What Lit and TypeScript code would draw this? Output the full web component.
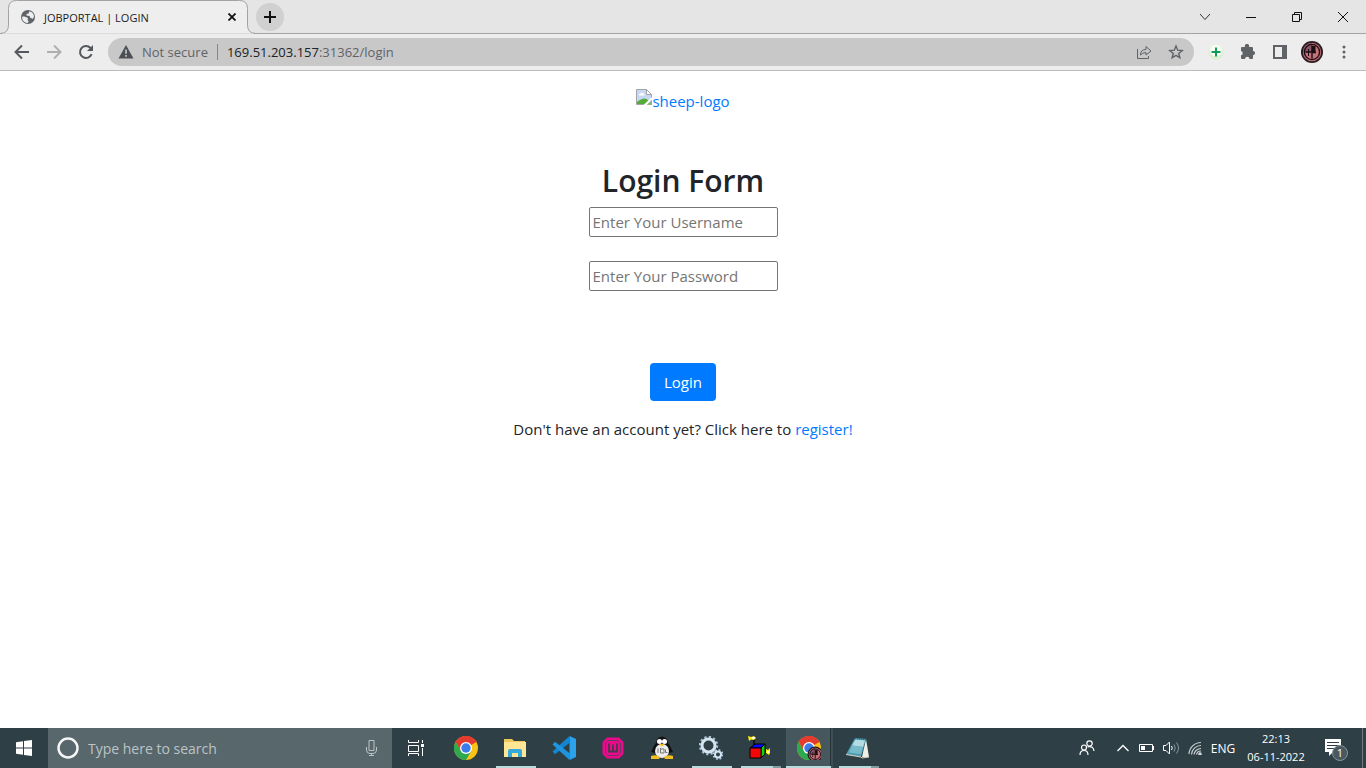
import { LitElement, html, css, svg } from "lit";
import { customElement } from "lit/decorators.js";
import { classMap } from "lit/directives/class-map.js";

const base = css`
  *,
  *::before,
  *::after {
    box-sizing: border-box;
  }
  button,
  input {
    margin: 0;
    padding: 0;
    border: 0;
    background: none;
    font: inherit;
    color: inherit;
  }
  svg {
    display: block;
    flex: none;
  }
`;

/* Shared Chrome logo, drawn in a 24-unit box. */
const chromeLogo = svg`
  <circle cx="12" cy="12" r="12" fill="#fbc116"/>
  <path d="M12 12 1.6 6A12 12 0 0 1 22.4 6Z" fill="#e33b2e"/>
  <path d="M12 6H22.4A12 12 0 0 0 1.6 6L6.8 15Z" fill="#e33b2e"/>
  <path d="M1.6 6A12 12 0 0 0 12 24L17.2 15 12 17.5 6.8 15Z" fill="#2da94f"/>
  <circle cx="12" cy="12" r="6" fill="#fff"/>
  <circle cx="12" cy="12" r="4.7" fill="#3a7de8"/>`;

/* Shared profile picture, drawn in a 22-unit box. */
const avatar = svg`
  <circle cx="11" cy="11" r="11" fill="#2a1a22"/>
  <circle cx="11" cy="11" r="9.2" fill="#c4727a"/>
  <path d="M11 2V11H2A9 9 0 0 1 11 2Z" fill="#8a5668"/>
  <circle cx="11" cy="11" r="7.6" fill="none" stroke="#1c0d12" stroke-width="1.4"/>
  <path d="M11 4.500V17.500M4.500 11H11M11 11.500H15" fill="none" stroke="#1c0d12" stroke-width="1.400"/>
  <path d="M11 5H14.500V11H11Z" fill="#1c0d12"/>
  <path d="M7.500 8V15" stroke="#1c0d12"/>`;

@customElement("browser-bar")
class BrowserBar extends LitElement {
  static styles = [
    base,
    css`
      :host {
        display: block;
        color: #5f6368;
      }
      .strip {
        display: flex;
        align-items: center;
        height: 34px;
        background: #e5e5e5;
        box-shadow: inset 0 -1px #a3a3a3;
      }
      .tab {
        position: relative;
        display: flex;
        align-items: center;
        gap: 8px;
        width: 256px;
        height: 34px;
        padding: 0 16px 0 20px;
        color: #1b1b1b;
        font-size: 11px;
      }
      .outline {
        position: absolute;
        inset: 0;
      }
      .tab > :not(.outline) {
        position: relative;
      }
      .title {
        flex: 1;
        white-space: nowrap;
      }
      button {
        display: grid;
        place-items: center;
      }
      .close {
        width: 16px;
        height: 16px;
      }
      .add {
        width: 28px;
        height: 28px;
        border-radius: 50%;
        background: #d0d0d0;
      }
      .controls {
        display: flex;
        margin-left: auto;
      }
      .controls button {
        width: 46px;
        height: 28px;
      }
      .toolbar {
        display: flex;
        align-items: center;
        height: 37px;
        padding: 0 6px;
        background: #ededed;
        border-bottom: 1px solid #bcbcbc;
      }
      .toolbar > button {
        width: 32px;
        height: 28px;
      }
      .address {
        display: flex;
        align-items: center;
        flex: 1;
        height: 28px;
        margin: 0 6px;
        padding: 0 2px 0 10px;
        border-radius: 14px;
        background: #c8c8c8;
        font-size: 13px;
      }
      .address button {
        width: 32px;
        height: 28px;
      }
      .address .secure {
        display: flex;
        align-items: center;
        width: auto;
        gap: 8px;
        white-space: nowrap;
      }
      .rule {
        width: 1px;
        height: 16px;
        margin: 0 9px;
        background: #85878a;
      }
      .url {
        flex: 1;
        white-space: nowrap;
      }
      .host {
        color: #202124;
      }
    `,
  ];

  render() {
    return html`
      <div class="strip">
        <div class="tab">
          <svg class="outline" width="256" height="34" fill="#eeeeee" stroke="#a3a3a3">
            <path d="M0 33.5Q8.500 33.500 8.500 25V8.500Q8.500.5 16.500.5H239.500Q247.500.5 247.500 8.500V25Q247.500 33.500 256 33.500" />
            <path d="M3 34H253" stroke="#eeeeee" stroke-width="1.200" />
          </svg>
          <svg width="16" height="16" viewBox="0 0 16 16">
            <circle cx="8" cy="8" r="7" fill="#5f6368" />
            <path d="M2.200 7.500 4.500 7.500 8 9 7.500 11 8.500 12 8 14 6 13.800A6 6 0 0 1 2.200 7.500Z" fill="#eee" />
            <path d="M9.500 2.200 8.500 4.500 6.500 5 6.500 6.500 9.500 7 10.500 9 13 9.800 14 7.500A6 6 0 0 0 9.500 2.200Z" fill="#eee" />
          </svg>
          <span class="title">JOBPORTAL | LOGIN</span>
          <button class="close" aria-label="Close tab">
            <svg width="8" height="8" stroke="#111" stroke-width="1.800"><path d="M.5.5 7.500 7.500M7.500.5.5 7.500" /></svg>
          </button>
        </div>
        <button class="add" aria-label="New tab">
          <svg width="12" height="12" stroke="#111" stroke-width="2"><path d="M6 0V12M0 6H12" /></svg>
        </button>
        <div class="controls">
          <button aria-label="Search tabs">
            <svg width="12" height="8" fill="none" stroke="#333"><path d="M1 1 6 6.500 11 1" /></svg>
          </button>
          <button aria-label="Minimize">
            <svg width="10" height="10" stroke="#111"><path d="M0 5.500H10" /></svg>
          </button>
          <button aria-label="Restore">
            <svg width="10" height="10" fill="none" stroke="#111"><path d="M.5 2.500H7.500V9.500H.5ZM2.500 2.500V.5H9.500V7.500H7.500" /></svg>
          </button>
          <button aria-label="Close">
            <svg width="10" height="10" stroke="#111"><path d="M0 0 10 10M10 0 0 10" /></svg>
          </button>
        </div>
      </div>
      <div class="toolbar">
        <button aria-label="Back">
          <svg width="16" height="16" fill="none" stroke="#54575b" stroke-width="1.900"><path d="M15 8H2M8 1.500 1.500 8 8 14.500" /></svg>
        </button>
        <button aria-label="Forward">
          <svg width="16" height="16" fill="none" stroke="#acaeb0" stroke-width="1.900"><path d="M1 8H14M8 1.500 14.500 8 8 14.500" /></svg>
        </button>
        <button aria-label="Reload">
          <svg width="16" height="16" fill="none" stroke="#54575b" stroke-width="2"><path d="M13.600 10.200A6 6 0 1 1 12.300 3.800L13.500 5" /><path d="M15 1V7H9Z" fill="#54575b" stroke="none" /></svg>
        </button>
        <div class="address">
          <button class="secure" aria-label="View site information">
            <svg width="16" height="16"><path d="M8 1 15.500 14.500H.5Z" fill="#4c4f53" /><path d="M8 5.500V9.800M8 11V12.800" stroke="#c8c8c8" stroke-width="1.600" /></svg>
            <span>Not secure</span>
          </button>
          <span class="rule"></span>
          <span class="url"><span class="host">169.51.203.157</span>:31362/login</span>
          <button aria-label="Share">
            <svg width="16" height="16" fill="none" stroke="#5f6368"><path d="M1.500 5V14.500H12.500V12M4.500 11Q4.500 5.500 10 5.500V2.500L15 7 10 11V8.500Q6.500 8.500 4.500 11Z" /></svg>
          </button>
          <button aria-label="Bookmark this tab">
            <svg width="16" height="16" fill="none" stroke="#5f6368" stroke-width="1.400"><path d="M8 2 9.700 6.200 14.200 6.500 10.700 9.400 11.900 13.800 8 11.400 4.100 13.800 5.300 9.400 1.800 6.500 6.300 6.200Z" /></svg>
          </button>
        </div>
        <button aria-label="Add-on">
          <svg width="16" height="16"><circle cx="8" cy="8" r="7.500" fill="#d9f0d2" /><circle cx="8" cy="6.500" r="6" fill="#f6fbf4" /><path d="M8 3.500V12.500M3.500 8H12.500" stroke="#129a5b" stroke-width="2" /></svg>
        </button>
        <button aria-label="Extensions">
          <svg width="16" height="16"><path d="M1 4Q1 3 2 3H5A2.200 2.200 0 1 1 9 3H12Q13 3 13 4V7A2.100 2.100 0 1 1 13 11.200V14Q13 15 12 15H9.500A2.200 2.200 0 0 0 5 15H2Q1 15 1 14V11.300A2.200 2.200 0 0 0 1 7Z" fill="#5f6368" /></svg>
        </button>
        <button aria-label="Side panel">
          <svg width="14" height="14"><path d="M1 1H13V13H1Z" fill="none" stroke="#5f6368" stroke-width="2" /><path d="M9 1H14V13H9Z" fill="#5f6368" /></svg>
        </button>
        <button aria-label="Profile"><svg width="22" height="22">${avatar}</svg></button>
        <button aria-label="Menu">
          <svg width="4" height="14" fill="#5f6368"><circle cx="2" cy="2" r="1.500" /><circle cx="2" cy="7" r="1.500" /><circle cx="2" cy="12" r="1.500" /></svg>
        </button>
      </div>
    `;
  }
}

@customElement("login-page")
class LoginPage extends LitElement {
  static styles = [
    base,
    css`
      :host {
        display: block;
        padding-top: 18px;
        background: #fff;
        color: #212529;
        font-size: 15px;
        line-height: 24px;
      }
      main {
        display: flex;
        flex-direction: column;
        align-items: center;
      }
      a {
        color: #007bff;
        text-decoration: none;
      }
      .logo {
        display: flex;
        margin-bottom: 48px;
      }
      h2 {
        margin: 0 0 6px;
        font-size: 30px;
        font-weight: 600;
        line-height: 40px;
      }
      form {
        display: flex;
        flex-direction: column;
        align-items: center;
      }
      input {
        width: 189px;
        height: 30px;
        margin-bottom: 24px;
        padding: 1px 3px;
        border: 1px solid #767676;
        border-radius: 2px;
        background: #fff;
      }
      input::placeholder {
        color: #757575;
        opacity: 1;
      }
      .submit {
        height: 38px;
        margin-top: 48px;
        padding: 0 14px;
        border-radius: 4px;
        background: #007bff;
        color: #fff;
      }
      p {
        margin: 16px 0 0;
      }
    `,
  ];

  render() {
    return html`
      <main>
        <a class="logo" href="#">
          <svg width="16" height="16">
            <path d="M.5.5H10.500L15.500 5.500V15.500H.5Z" fill="#c6d8f4" stroke="#a4a4a4" />
            <path d="M3 6.500A1.500 1.500 0 0 1 4.500 4.500 2 2 0 0 1 8 5 1.300 1.300 0 0 1 8.500 6.500Z" fill="#fff" />
            <path d="M1 15V13Q8 7 12 11L15 15Z" fill="#55ab3a" />
            <path d="M10.500.5V5.500H15.500Z" fill="#fff" stroke="#a4a4a4" />
            <path d="M7.500 16 16 8V10.500L11 16Z" fill="#fff" />
            <path d="M11 16 16 11V16Z" fill="#8db58a" />
          </svg>
          <span>sheep-logo</span>
        </a>
        <h2>Login Form</h2>
        <form @submit=${(e: Event) => e.preventDefault()}>
          <input type="text" placeholder="Enter Your Username" aria-label="Username" />
          <input type="password" placeholder="Enter Your Password" aria-label="Password" />
          <button class="submit" type="submit">Login</button>
        </form>
        <p>Don't have an account yet? Click here to <a href="#register">register!</a></p>
      </main>
    `;
  }
}

interface App {
  name: string;
  icon: unknown;
  state?: "open" | "stacked" | "active";
}

const apps: App[] = [
  { name: "Google Chrome", icon: chromeLogo },
  {
    name: "File Explorer",
    state: "open",
    icon: svg`
      <path d="M1 3H9L11 5H22V21H1Z" fill="#f0c75a"/>
      <path d="M1 6H23V21H1Z" fill="#ffe694"/>
      <path d="M5 21V15Q5 13 7 13H17Q19 13 19 15V21H15V17H9V21Z" fill="#35a8dc"/>`,
  },
  {
    name: "Visual Studio Code",
    icon: svg`
      <path d="M17.500 0 24 3V21L17.500 24Z" fill="#2ba3ec"/>
      <path d="M17.500 0 .5 15.500 3 18.300 18 6.500Z" fill="#1286d3"/>
      <path d="M17.500 24 .5 8.500 3 5.700 18 17.500Z" fill="#1f95e0"/>`,
  },
  {
    name: "WampServer",
    icon: svg`
      <path d="M6 1.500H18L22.500 6V18L18 22.500H6L1.500 18V6Z" fill="#ec0a8c"/>
      <path d="M7 4.500H17L19.500 7V17L17 19.500H7L4.500 17V7Z" fill="none" stroke="#6b3560"/>
      <path d="M8 7.500V15.500H16V7.500M12 8.500V15.500" fill="none" stroke="#47384c" stroke-width="1.800"/>`,
  },
  {
    name: "IDLE",
    icon: svg`
      <path d="M4 10 1 16 5 17ZM20 10 23 16 19 17Z" fill="#111"/>
      <ellipse cx="12" cy="13" rx="8.500" ry="9" fill="#111"/>
      <circle cx="12" cy="6" r="5.500" fill="#151515"/>
      <ellipse cx="12" cy="15" rx="7" ry="7" fill="#ececec"/>
      <circle cx="9.500" cy="5.500" r="2.500" fill="#fff"/><circle cx="14.500" cy="5.500" r="2.500" fill="#fff"/>
      <path d="M9 8H15L12 10.500Z" fill="#f3bd20"/>
      <path d="M8 12.500V17M10.500 12V17H14V13H11M15.500 13.500V16.500H17.500" fill="none" stroke="#777"/>
      <path d="M1 20Q6 18 10 21L9 23H1ZM23 20Q18 18 14 21L15 23H23Z" fill="#f3bd20"/>`,
  },
  {
    name: "Services",
    state: "open",
    icon: svg`
      <circle cx="9.500" cy="9.500" r="8.500" fill="none" stroke="#a7bfd2" stroke-width="2.500" stroke-dasharray="2.225 2.225"/>
      <circle cx="9.500" cy="9.500" r="6.500" fill="none" stroke="#d5e4f0" stroke-width="3"/>
      <circle cx="19" cy="18.500" r="4.500" fill="none" stroke="#a7c5dd" stroke-width="2" stroke-dasharray="1.770 1.770"/>
      <circle cx="19" cy="18.500" r="3" fill="none" stroke="#d5e4f0" stroke-width="2"/>`,
  },
  {
    name: "Cube",
    state: "stacked",
    icon: svg`
      <path d="M2 12 7 8H17L13 12Z" fill="#0a0aff" stroke="#000"/>
      <path d="M13 12 17 8V18L13 22Z" fill="#10d010" stroke="#000"/>
      <path d="M2 12H13V22H2Z" fill="#f40606" stroke="#000"/>
      <path d="M6 3V9M17 15H20" stroke="#000" stroke-width="1.300"/>
      <path d="M0 0 3 1 6 0 8 2 6 4 3 3.500 1 5ZM18 13 20 14 22 12V17L21 19 18 17Z" fill="#ffee10"/>
      <path d="M4 1H7V3H4ZM19 15H21V17H19Z" fill="#fffbd0"/>`,
  },
  {
    name: "Google Chrome window",
    state: "active",
    icon: svg`${chromeLogo}<g transform="translate(10.500 10.500) scale(.7)">${avatar}</g>`,
  },
  {
    name: "Notepad",
    state: "stacked",
    icon: svg`
      <path d="M20 3 23 21H16Z" fill="#f0efe6"/>
      <path d="M9 2 20 3 15 21 0 18.500Z" fill="#4f9fb4"/>
      <path d="M9.500 3.500 19 4.500 17 11 6 9.500Z" fill="#b2dbe3"/>
      <path d="M6 9.500 17 11 15 18 3 16.500Z" fill="#78bac9"/>
      <path d="M0 18.500 15 21 16 22 23 21" fill="none" stroke="#d8d3c0"/>
      <path d="M9 2.500 21 3.500" stroke="#595f60" stroke-width="1.500" stroke-dasharray="1 1"/>`,
  },
];

@customElement("task-bar")
class TaskBar extends LitElement {
  static styles = [
    base,
    css`
      :host {
        display: flex;
        height: 40px;
        background: #2f3f46;
        color: #fff;
        font-size: 12px;
      }
      button {
        display: grid;
        place-items: center;
      }
      .start {
        width: 48px;
      }
      .search {
        display: flex;
        align-items: center;
        gap: 9px;
        width: 344px;
        padding: 0 14px 0 9px;
        background: #58676c;
        font-size: 14px;
      }
      .search input {
        flex: 1;
        min-width: 0;
        outline: 0;
      }
      .search input::placeholder {
        color: #bcc3c6;
        opacity: 1;
      }
      .apps {
        display: flex;
        gap: 1px;
        margin-left: 2px;
      }
      .app {
        position: relative;
        width: 48px;
      }
      .open::after,
      .stacked::after,
      .active::after {
        content: "";
        position: absolute;
        bottom: 0;
        left: 5px;
        width: 40px;
        height: 2px;
        background: #b7dbdd;
      }
      .stacked::after {
        background: linear-gradient(90deg, #b7dbdd 32px, #829da0 32px);
      }
      .active {
        background: linear-gradient(90deg, transparent 1px, #46575e 1px 45px, #26343a 45px 46px, #3d4e55 46px);
      }
      .active::after {
        left: 1px;
        width: 45px;
      }
      .tray {
        display: flex;
        align-items: center;
        margin-left: auto;
      }
      .tray button {
        height: 40px;
      }
      .icon {
        width: 24px;
      }
      .people {
        width: 48px;
      }
      .lang {
        width: 32px;
      }
      .clock {
        width: 74px;
        font-size: 11px;
        line-height: 18px;
      }
      .notices {
        width: 46px;
        margin-right: 3px;
      }
      .desktop {
        width: 4px;
        border-left: 1px solid #6f7c81;
      }
    `,
  ];

  render() {
    return html`
      <button class="start" aria-label="Start">
        <svg width="16" height="16" fill="#fff"><path d="M0 2.200 7 1.200V7.500H0ZM8 1 16 0V7.500H8ZM0 8.500H7V14.800L0 13.800ZM8 8.500H16V16L8 15Z" /></svg>
      </button>
      <label class="search">
        <svg width="22" height="22"><circle cx="11" cy="11" r="9.500" fill="none" stroke="#f5f5f5" stroke-width="2.500" /></svg>
        <input type="text" placeholder="Type here to search" aria-label="Search" />
        <svg width="13" height="16" fill="none" stroke="#bcc3c6"><path d="M4 .5H9V10.500H4ZM1.500 7V10Q1.500 13.500 5 13.500H8Q11.500 13.500 11.500 10V7M6.500 13.500V16M4 15.500H9" /></svg>
      </label>
      <button class="start" aria-label="Task view">
        <svg width="18" height="16" fill="none" stroke="#fff"><path d="M1.500 0V2.500H11.500V0M1.500 5.500H11.500V11.500H1.500ZM1.500 16V13.500H11.500V16M15.500 0V3M15.500 8V16" /><path d="M14 4H17V7H14Z" fill="#fff" stroke="none" /></svg>
      </button>
      <nav class="apps">
        ${apps.map(
          (a) => html`<button
            class=${classMap({ app: true, open: a.state === "open", stacked: a.state === "stacked", active: a.state === "active" })}
            aria-label=${a.name}
          >
            <svg width="24" height="24" viewBox="0 0 24 24">${a.icon}</svg>
          </button>`
        )}
      </nav>
      <div class="tray">
        <button class="people" aria-label="People">
          <svg width="16" height="16" fill="none" stroke="#fff" stroke-width="1.200"><circle cx="5" cy="7.500" r="2.500" /><path d="M1 15Q1 10.500 5 10.500T9 15" /><circle cx="10.500" cy="3.500" r="2.700" /><path d="M8.500 7Q14.500 5.500 15 11" /></svg>
        </button>
        <button class="icon" aria-label="Show hidden icons">
          <svg width="12" height="8" fill="none" stroke="#fff" stroke-width="1.300"><path d="M.5 7 6 1.500 11.500 7" /></svg>
        </button>
        <button class="icon" aria-label="Battery">
          <svg width="16" height="10" fill="none" stroke="#fff"><path d="M.5 1.500H13.500V8.500H.5ZM14.500 3V7" /><path d="M2 3H6V7H2Z" fill="#fff" stroke="none" /></svg>
        </button>
        <button class="icon" aria-label="Volume">
          <svg width="17" height="14" fill="none" stroke="#fff"><path d="M.5 4.500H3L6.500 1V13L3 9.500H.5ZM8.500 5Q10 7 8.500 9" /><path d="M11 3.500Q13.500 7 11 10.500M13.500 1.500Q17.500 7 13.500 12.500" stroke="#8b979c" /></svg>
        </button>
        <button class="icon" aria-label="Network">
          <svg width="14" height="14" fill="none" stroke="#c9d0d3" stroke-width="1.200"><path d="M1 13A12 12 0 0 1 13 1.500M3.500 13.500A9.500 9.500 0 0 1 13 4.500M6 13.500A7 7 0 0 1 13 7.500M8.500 13.500A4.500 4.500 0 0 1 13 10" /><circle cx="12" cy="13" r="1.200" fill="#fff" /></svg>
        </button>
        <button class="lang" aria-label="Input language English">ENG</button>
        <button class="clock"><span>22:13<br />06-11-2022</span></button>
        <button class="notices" aria-label="Notifications">
          <svg width="26" height="26">
            <path d="M2 4H18V17H10L6 21V17H2Z" fill="#fff" />
            <path d="M4 7.500H16M4 10.500H16M4 13.500H12" stroke="#2f3f46" />
            <circle cx="17" cy="18" r="7.500" fill="#4a595f" stroke="#879398" />
            <text x="17" y="22" text-anchor="middle" font-size="11" fill="#fff">1</text>
          </svg>
        </button>
        <button class="desktop" aria-label="Show desktop"></button>
      </div>
    `;
  }
}

@customElement("app-root")
class AppRoot extends LitElement {
  static styles = css`
    :host {
      display: flex;
      flex-direction: column;
      min-height: 100vh;
      font-family: "Open Sans", "Noto Sans", sans-serif;
    }
    login-page {
      flex: 1;
    }
  `;

  render() {
    return html`<browser-bar></browser-bar><login-page></login-page><task-bar></task-bar>`;
  }
}
